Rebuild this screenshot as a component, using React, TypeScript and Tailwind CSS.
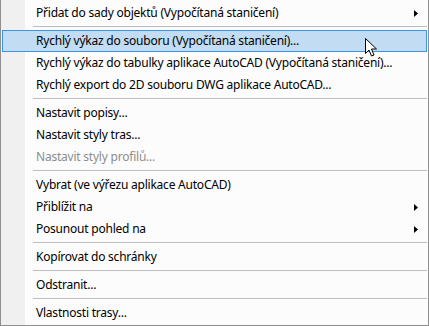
import { ReactNode } from 'react';

type Entry =
  | { kind: 'item'; label: string; sub?: boolean; disabled?: boolean; hover?: boolean }
  | { kind: 'sep' };

const ENTRIES: Entry[] = [
  { kind: 'item', label: 'Přidat do sady objektů (Vypočítaná staničení)', sub: true },
  { kind: 'sep' },
  { kind: 'item', label: 'Rychlý výkaz do souboru (Vypočítaná staničení)...', hover: true },
  { kind: 'item', label: 'Rychlý výkaz do tabulky aplikace AutoCAD (Vypočítaná staničení)...' },
  { kind: 'item', label: 'Rychlý export do 2D souboru DWG aplikace AutoCAD...' },
  { kind: 'sep' },
  { kind: 'item', label: 'Nastavit popisy...' },
  { kind: 'item', label: 'Nastavit styly tras...' },
  { kind: 'item', label: 'Nastavit styly profilů...', disabled: true },
  { kind: 'sep' },
  { kind: 'item', label: 'Vybrat (ve výřezu aplikace AutoCAD)' },
  { kind: 'item', label: 'Přiblížit na', sub: true },
  { kind: 'item', label: 'Posunout pohled na', sub: true },
  { kind: 'sep' },
  { kind: 'item', label: 'Kopírovat do schránky' },
  { kind: 'sep' },
  { kind: 'item', label: 'Odstranit...' },
  { kind: 'sep' },
  { kind: 'item', label: 'Vlastnosti trasy...' },
];

function SubArrow() {
  return (
    <svg width="4" height="7" viewBox="0 0 4 7" className="absolute right-[8px] top-[7px]">
      <path d="M0 0 L4 3.5 L0 7 Z" fill="#000" />
    </svg>
  );
}

function Cursor() {
  return (
    <svg
      width="14"
      height="20"
      viewBox="0 0 14 20"
      className="absolute left-[364px] top-[38px]"
    >
      <path
        d="M0.5 0.5 L0.5 15.5 L4 12 L6.5 18 L9 17 L6.5 11 L11.5 11 Z"
        fill="#fff"
        stroke="#000"
        strokeWidth="1"
        strokeLinejoin="miter"
      />
    </svg>
  );
}

function Row({ children, hover }: { children: ReactNode; hover?: boolean }) {
  return (
    <div
      className={`relative h-[22px] flex items-center mx-[1px] ${
        hover ? 'bg-[#c1dcf3] border border-[#3d95e0]' : 'border border-transparent'
      }`}
    >
      {children}
    </div>
  );
}

export default function App() {
  return (
    <div
      className="relative w-[429px] h-[326px] bg-[#fcfcfc] border-l border-r border-b border-[#8f8f8f] overflow-hidden pt-[2px]"
      style={{ fontFamily: '"Noto Sans", "Open Sans", sans-serif' }}
    >
      <div className="absolute left-0 top-0 bottom-0 w-[24px] bg-[#f0f0f0]" />
      {ENTRIES.map((e, i) =>
        e.kind === 'sep' ? (
          <div key={i} className="relative h-[6px] pt-[2px]">
            <div className="ml-[32px] mr-[1px] h-px bg-[#bdbdbd]" />
          </div>
        ) : (
          <Row key={i} hover={e.hover}>
            <span
              className={`pl-[33px] text-[12px] tracking-[-0.22px] leading-none whitespace-nowrap ${
                e.disabled ? 'text-[#8d8d8d]' : 'text-black'
              }`}
            >
              {e.label}
            </span>
            {e.sub && <SubArrow />}
          </Row>
        )
      )}
      <Cursor />
    </div>
  );
}
